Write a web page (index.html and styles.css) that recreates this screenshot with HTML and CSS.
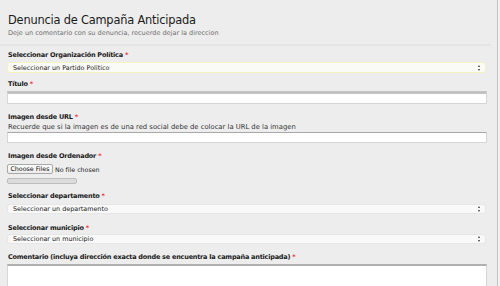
FILE: index.html
```html
<!DOCTYPE html>
<html lang="es">
<head>
<meta charset="utf-8">
<title>Denuncia de Campaña Anticipada</title>
<link rel="stylesheet" href="styles.css">
</head>
<body>
<div class="page">
  <header class="header">
    <h1 class="title">Denuncia de Campaña Anticipada</h1>
    <p class="subtitle">Deje un comentario con su denuncia, recuerde dejar la direccion</p>
  </header>
  <div class="rule"></div>
  <form class="form">
    <div class="field f-org">
      <label class="label">Seleccionar Organización Política <span class="req">*</span></label>
      <div class="select select-hl"><span>Seleccionar un Partido Político</span><span class="arrows"></span></div>
    </div>
    <div class="field f-titulo">
      <label class="label">Título <span class="req">*</span></label>
      <div class="input input-thick"></div>
    </div>
    <div class="field f-url">
      <label class="label">Imagen desde URL <span class="req">*</span></label>
      <p class="help">Recuerde que si la imagen es de una red social debe de colocar la URL de la imagen</p>
      <div class="input"></div>
    </div>
    <div class="field f-file">
      <label class="label">Imagen desde Ordenador <span class="req">*</span></label>
      <div class="file-row"><span class="file-btn">Choose Files</span><span class="file-none">No file chosen</span></div>
      <div class="progress"></div>
    </div>
    <div class="field f-dep">
      <label class="label">Seleccionar departamento <span class="req">*</span></label>
      <div class="select"><span>Seleccionar un departamento</span><span class="arrows"></span></div>
    </div>
    <div class="field f-mun">
      <label class="label">Seleccionar municipio <span class="req">*</span></label>
      <div class="select"><span>Seleccionar un municipio</span><span class="arrows"></span></div>
    </div>
    <div class="field f-com">
      <label class="label">Comentario (incluya dirección exacta donde se encuentra la campaña anticipada) <span class="req">*</span></label>
      <div class="textarea"></div>
    </div>
  </form>
</div>
</body>
</html>
```
FILE: styles.css
```css
html, body {
  margin: 0;
  padding: 0;
  background: #f1f1f1;
  height: 286px;
  overflow: hidden;
}
body {
  font-family: "DejaVu Sans", "Liberation Sans", sans-serif;
  color: #222;
}
.page {
  width: 498px;
  height: 286px;
  box-sizing: border-box;
  background: #ededed;
  border-right: 1px solid #c6c6c6;
}
.header {
  padding: 12px 0 0 8px;
}
.title {
  margin: 0;
  font-size: 11.4px;
  line-height: 16px;
  letter-spacing: -0.2px;
  font-weight: normal;
  color: #1a1a1a;
}
.subtitle {
  margin: 0;
  font-size: 6.5px;
  line-height: 10px;
  color: #707070;
}
.rule {
  margin-top: 6px;
  width: 491px;
  height: 2px;
  background: #e4e4e4;
}
.form {
  padding: 0 0 0 7px;
  width: 480px;
}
.field {
  display: flex;
  flex-direction: column;
}
.label {
  display: block;
  padding-left: 1px;
  font-size: 6.5px;
  line-height: 10px;
  letter-spacing: -0.22px;
  font-weight: bold;
  color: #1a1a1a;
}
.req {
  color: #e33;
}
.help {
  margin: 0;
  padding-left: 1px;
  font-size: 6.8px;
  line-height: 10px;
  color: #333;
}
.f-org { margin-top: 4px; }
.f-titulo { margin-top: 6px; }
.f-url { margin-top: 8px; }
.f-file { margin-top: 8px; }
.f-dep { margin-top: 7px; }
.f-mun { margin-top: 9px; }
.f-com { margin-top: 8px; }

.select {
  display: flex;
  align-items: center;
  justify-content: space-between;
  box-sizing: border-box;
  height: 11px;
  margin-top: 2px;
  width: 479px;
  padding: 0 4px 0 5px;
  background: #f9f9f9;
  border: 1px solid #e6e6e6;
  border-radius: 3px;
  font-size: 6.4px;
  color: #222;
}
.f-dep .select { margin-top: 3px; height: 10px; }
.f-mun .select { margin-top: 1px; height: 10px; }
.select-hl {
  border-color: #f3f3c4;
  background: #fafaf6;
}
.arrows {
  width: 3px;
  height: 6px;
  position: relative;
}
.arrows::before, .arrows::after {
  content: "";
  position: absolute;
  left: 0;
  border-left: 1.5px solid transparent;
  border-right: 1.5px solid transparent;
}
.arrows::before {
  top: 0;
  border-bottom: 2.5px solid #333;
}
.arrows::after {
  bottom: 0;
  border-top: 2.5px solid #333;
}
.input {
  box-sizing: border-box;
  width: 480px;
  height: 11px;
  background: #fff;
  border: 1px solid #d6d6d6;
  border-top-color: #a8a8a8;
}
.input-thick {
  margin-top: 2px;
  height: 13px;
  border-top: 3px solid #c2c2c2;
}
.file-row {
  display: flex;
  align-items: center;
  margin-top: 3px;
  height: 10px;
}
.file-btn {
  box-sizing: border-box;
  width: 46px;
  height: 10px;
  border: 1px solid #a8a8a8;
  border-radius: 2px;
  background: linear-gradient(#fdfdfd, #ececec);
  font-size: 6.3px;
  line-height: 8px;
  text-align: center;
  color: #111;
}
.file-none {
  margin-left: 2px;
  font-size: 6.3px;
  color: #222;
}
.progress {
  margin-top: 4px;
  width: 70px;
  height: 6px;
  box-sizing: border-box;
  border: 1px solid #bdbdbd;
  border-radius: 2px;
  background: #dcdcdc;
}
.textarea {
  margin-top: 2px;
  box-sizing: border-box;
  width: 480px;
  height: 30px;
  background: #fff;
  border: 1px solid #d6d6d6;
  border-top: 2px solid #b0b0b0;
}
```
